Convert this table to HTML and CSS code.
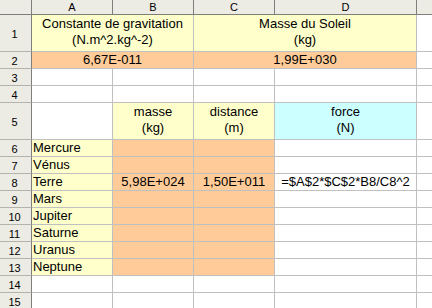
FILE: index.html
```html
<!DOCTYPE html>
<html>
<head>
<meta charset="utf-8">
<link rel="stylesheet" href="styles.css">
</head>
<body>
<div class="sheet">
  <div class="corner"></div>
  <div class="ch">A</div>
  <div class="ch">B</div>
  <div class="ch">C</div>
  <div class="ch">D</div>
  <div class="ch last"></div>

  <div class="rh">1</div>
  <div class="c y two span2">Constante de gravitation<br>(N.m^2.kg^-2)</div>
  <div class="c y two span2">Masse du Soleil<br>(kg)</div>
  <div class="c last"></div>

  <div class="rh">2</div>
  <div class="c o span2">6,67E-011</div>
  <div class="c o span2">1,99E+030</div>
  <div class="c last"></div>

  <div class="rh">3</div>
  <div class="c"></div><div class="c"></div><div class="c"></div><div class="c"></div><div class="c last"></div>

  <div class="rh">4</div>
  <div class="c"></div><div class="c"></div><div class="c"></div><div class="c"></div><div class="c last"></div>

  <div class="rh">5</div>
  <div class="c"></div>
  <div class="c y two">masse<br>(kg)</div>
  <div class="c y two">distance<br>(m)</div>
  <div class="c cy two">force<br>(N)</div>
  <div class="c last"></div>

  <div class="rh">6</div>
  <div class="c y l">Mercure</div><div class="c o"></div><div class="c o"></div><div class="c"></div><div class="c last"></div>

  <div class="rh">7</div>
  <div class="c y l">Vénus</div><div class="c o"></div><div class="c o"></div><div class="c"></div><div class="c last"></div>

  <div class="rh">8</div>
  <div class="c y l">Terre</div><div class="c o">5,98E+024</div><div class="c o">1,50E+011</div><div class="c">=$A$2*$C$2*B8/C8^2</div><div class="c last"></div>

  <div class="rh">9</div>
  <div class="c y l">Mars</div><div class="c o"></div><div class="c o"></div><div class="c"></div><div class="c last"></div>

  <div class="rh">10</div>
  <div class="c y l">Jupiter</div><div class="c o"></div><div class="c o"></div><div class="c"></div><div class="c last"></div>

  <div class="rh">11</div>
  <div class="c y l">Saturne</div><div class="c o"></div><div class="c o"></div><div class="c"></div><div class="c last"></div>

  <div class="rh">12</div>
  <div class="c y l">Uranus</div><div class="c o"></div><div class="c o"></div><div class="c"></div><div class="c last"></div>

  <div class="rh">13</div>
  <div class="c y l">Neptune</div><div class="c o"></div><div class="c o"></div><div class="c"></div><div class="c last"></div>

  <div class="rh">14</div>
  <div class="c"></div><div class="c"></div><div class="c"></div><div class="c"></div><div class="c last"></div>

  <div class="rh">15</div>
  <div class="c"></div><div class="c"></div><div class="c"></div><div class="c"></div><div class="c last"></div>
</div>
</body>
</html>
```
FILE: styles.css
```css
html, body {
  margin: 0;
  padding: 0;
  background: #ffffff;
  overflow: hidden;
}

.sheet {
  display: grid;
  grid-template-columns: 32px 81px 81px 81px 142px 15px;
  grid-template-rows: 15px 37px 17px 17px 17px 37px repeat(10, 17px);
  width: 432px;
  height: 308px;
  overflow: hidden;
  font-family: "Liberation Sans", Arial, sans-serif;
  font-size: 13px;
  color: #000000;
}

.sheet > div {
  box-sizing: border-box;
  display: flex;
  align-items: center;
  justify-content: center;
  text-align: center;
  line-height: 16px;
  white-space: nowrap;
  overflow: hidden;
}

.corner {
  background: #ecebe4;
  border-right: 1px solid #7f7f7a;
  border-bottom: 1px solid #7f7f7a;
}

.ch {
  background: #ecebe4;
  border-right: 1px solid #7f7f7a;
  border-bottom: 1px solid #7f7f7a;
  font-size: 11px;
  line-height: 14px;
}

.ch.last {
  border-right: none;
}

.rh {
  background: #ecebe4;
  border-right: 1px solid #7f7f7a;
  border-bottom: 1px solid #b3b2ab;
  font-size: 11px;
  line-height: 14px;
  padding-top: 2px;
  padding-right: 2px;
}

.c {
  background: #ffffff;
  border-right: 1px solid #c0c0c0;
  border-bottom: 1px solid #c0c0c0;
}

.c.last {
  border-right: none;
}

.span2 {
  grid-column: span 2;
}

.y {
  background: #ffffcc;
}

.o {
  background: #ffcc99;
}

.cy {
  background: #ccffff;
}

.sheet > .two {
  align-items: flex-start;
  padding-top: 1px;
}

.sheet > .l {
  justify-content: flex-start;
  padding-left: 1px;
}
```
